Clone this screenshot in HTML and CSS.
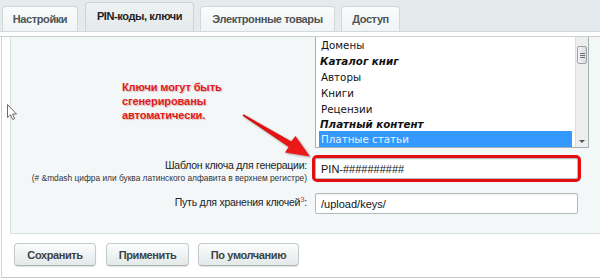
FILE: index.html
```html
<!DOCTYPE html>
<html lang="ru">
<head>
<meta charset="utf-8">
<title>PIN-коды, ключи</title>
<link rel="stylesheet" href="styles.css">
</head>
<body>
<div class="tabs">
  <div class="tab t1">Настройки</div>
  <div class="tab t2 active">PIN-коды, ключи</div>
  <div class="tab t3">Электронные товары</div>
  <div class="tab t4">Доступ</div>
</div>
<div class="tabs-bottom"></div>
<div class="frame">
  <div class="panel">
    <div class="form">
      <div class="cell"></div>
      <div class="listbox">
        <div class="items">
          <div class="opt first">Домены</div>
          <div class="grp">Каталог книг</div>
          <div class="opt">Авторы</div>
          <div class="opt">Книги</div>
          <div class="opt">Рецензии</div>
          <div class="grp short">Платный контент</div>
          <div class="opt selected">Платные статьи</div>
        </div>
        <div class="scrollbar">
          <div class="thumb"><span></span><span></span><span></span></div>
          <div class="down"></div>
        </div>
      </div>
      <div class="label l1">Шаблон ключа для генерации:<div class="hint">(# &amp;mdash цифра или буква латинского алфавита в верхнем регистре)</div></div>
      <div class="field f1"><input class="input hl" type="text" value="PIN-##########"></div>
      <div class="label l2">Путь для хранения ключей<sup>3</sup>:</div>
      <div class="field f2"><input class="input" type="text" value="/upload/keys/"></div>
    </div>
  </div>
  <div class="buttons">
    <button class="btn b1">Сохранить</button>
    <button class="btn b2">Применить</button>
    <button class="btn b3">По умолчанию</button>
  </div>
</div>
<div class="note">Ключи могут быть<br>сгенерированы<br>автоматически.</div>
<svg class="overlay" width="600" height="278" viewBox="0 0 600 278">
  <defs>
    <linearGradient id="ar" x1="0" y1="0" x2="1" y2="1">
      <stop offset="0" stop-color="#d40d0d"/>
      <stop offset="1" stop-color="#ee1c1c"/>
    </linearGradient>
  </defs>
  <polygon class="arrow" fill="url(#ar)" points="243.4,114.3 291.2,141.2 295.5,135.9 310,156.5 284.9,152.6 288.6,146.9 242.6,115.7"/>
  <path class="cursor" d="M7.5 104.5 L7.5 117.5 L10.5 114.8 L12.6 119.5 L14.6 118.6 L12.6 114 L16.5 114 Z"/>
</svg>
</body>
</html>
```
FILE: styles.css
```css
html, body {
  margin: 0;
  padding: 0;
}
body {
  width: 600px;
  height: 278px;
  overflow: hidden;
  position: relative;
  background: #ffffff;
  font-family: "Liberation Sans", Arial, sans-serif;
  color: #222;
}
.tabs {
  height: 31px;
  background: #e5ebed;
  border-bottom: 1px solid #d2d9db;
  display: flex;
  align-items: flex-end;
  gap: 6px;
  padding-left: 2px;
}
.tab {
  box-sizing: border-box;
  height: 25px;
  line-height: 25px;
  text-align: center;
  border: 1px solid #d0d8da;
  border-bottom: none;
  border-radius: 4px 4px 0 0;
  background: linear-gradient(#fbfcfc, #f0f3f4);
  font-weight: bold;
  font-size: 11px;
  letter-spacing: -0.4px;
  color: #4b5457;
  white-space: nowrap;
}
.t1 { width: 76px; }
.t2 { width: 109px; margin-left: 1px; }
.t3 { width: 135px; }
.t4 { width: 59px; }
.tab.active {
  height: 29px;
  line-height: 27px;
  background: linear-gradient(#eef2f3, #e4e9eb);
  border-color: #cbd3d5;
  color: #1d2325;
}
.tabs-bottom {
  height: 4px;
  background: #fff;
  border-bottom: 1px solid #c9d1d3;
}
.frame {
  margin-left: 1px;
  border-left: 1px solid #cdd4d6;
  border-bottom: 1px solid #bfc6c8;
  height: 240px;
}
.panel {
  margin-left: 8px;
  height: 196px;
  background: #f4f7f8;
  border-left: 1px solid #d6dfe2;
  border-bottom: 1px solid #d5e3e6;
}
.form {
  display: grid;
  grid-template-columns: 296px 274px;
  column-gap: 8px;
}
.listbox {
  display: flex;
  height: 110px;
  background: #fff;
  border: 1px solid #a7b0b3;
  border-top: none;
}
.items {
  flex: 1;
  padding: 0 3px;
  font-family: "DejaVu Sans", Verdana, sans-serif;
  font-size: 10.3px;
  color: #111;
}
.opt {
  height: 16px;
  line-height: 16px;
  padding-left: 2px;
}
.opt.first {
  height: 17px;
  line-height: 17px;
}
.grp {
  height: 15px;
  line-height: 15px;
  padding-left: 1px;
  font-weight: bold;
  font-style: italic;
}
.grp.short {
  height: 14px;
  line-height: 14px;
}
.opt.selected {
  background: #3399ff;
  color: #e6f1ff;
}
.scrollbar {
  width: 12px;
  background: #eeeeee;
  border-left: 1px solid #dcdcdc;
  position: relative;
}
.thumb {
  position: absolute;
  left: 1px;
  top: 9px;
  width: 8px;
  height: 16px;
  border: 1px solid #9da3a6;
  border-radius: 2px;
  background: linear-gradient(90deg, #f4f4f4, #dadada);
  display: flex;
  flex-direction: column;
  justify-content: center;
  align-items: center;
  gap: 1px;
}
.thumb span {
  width: 5px;
  height: 1px;
  background: #6b6f71;
}
.down {
  position: absolute;
  left: 3px;
  bottom: 4px;
  width: 0;
  height: 0;
  border-left: 3px solid transparent;
  border-right: 3px solid transparent;
  border-top: 3px solid #555;
}
.label {
  text-align: right;
  font-size: 10.5px;
  letter-spacing: -0.25px;
  line-height: 14px;
  color: #222;
}
.l1 {
  padding-top: 10px;
}
.hint {
  margin-top: 1px;
  font-size: 8.35px;
  letter-spacing: 0;
  line-height: 10px;
  white-space: nowrap;
  color: #333;
}
.l2 {
  padding-top: 12px;
}
.l2 sup {
  color: #e33;
  font-size: 8px;
  line-height: 0;
  vertical-align: 4px;
}
.f1 {
  padding-top: 10px;
}
.f2 {
  padding-top: 10px;
}
.input {
  display: block;
  box-sizing: border-box;
  width: 263px;
  height: 21px;
  margin: 0;
  padding: 0 5px;
  border: 1px solid #b3bbbe;
  border-radius: 2px;
  background: #fff;
  box-shadow: inset 0 1px 1px rgba(0, 0, 0, 0.07);
  font-family: "Liberation Sans", Arial, sans-serif;
  font-size: 11px;
  color: #111;
}
.input.hl {
  outline: 3px solid #e30d0d;
  outline-offset: 0;
}
.buttons {
  display: flex;
  gap: 10px;
  padding: 9px 0 0 12px;
}
.btn {
  box-sizing: border-box;
  height: 23px;
  padding: 0;
  margin: 0;
  text-align: center;
  border: 1px solid #c3cacd;
  border-bottom-color: #aab2b5;
  border-radius: 4px;
  background: linear-gradient(#fcfdfd, #e3e8e9);
  box-shadow: 0 1px 1px rgba(0, 0, 0, 0.12);
  font-family: "Liberation Sans", Arial, sans-serif;
  font-weight: bold;
  font-size: 11px;
  letter-spacing: -0.4px;
  color: #3b4346;
}
.b1 { width: 82px; }
.b2 { width: 83px; }
.b3 { width: 101px; margin-left: -1px; }
.note {
  position: absolute;
  left: 122px;
  top: 80px;
  font-size: 11px;
  letter-spacing: -0.1px;
  line-height: 14px;
  font-weight: bold;
  color: #e31b1b;
  text-shadow: 1px 1px 1px rgba(120, 0, 0, 0.25);
}
.overlay {
  position: absolute;
  left: 0;
  top: 0;
  pointer-events: none;
}
.arrow {
  filter: drop-shadow(1px 1px 1px rgba(0, 0, 0, 0.35));
}
.cursor {
  fill: #fff;
  stroke: #6b6b6b;
  stroke-width: 1;
  stroke-linejoin: round;
}
```
